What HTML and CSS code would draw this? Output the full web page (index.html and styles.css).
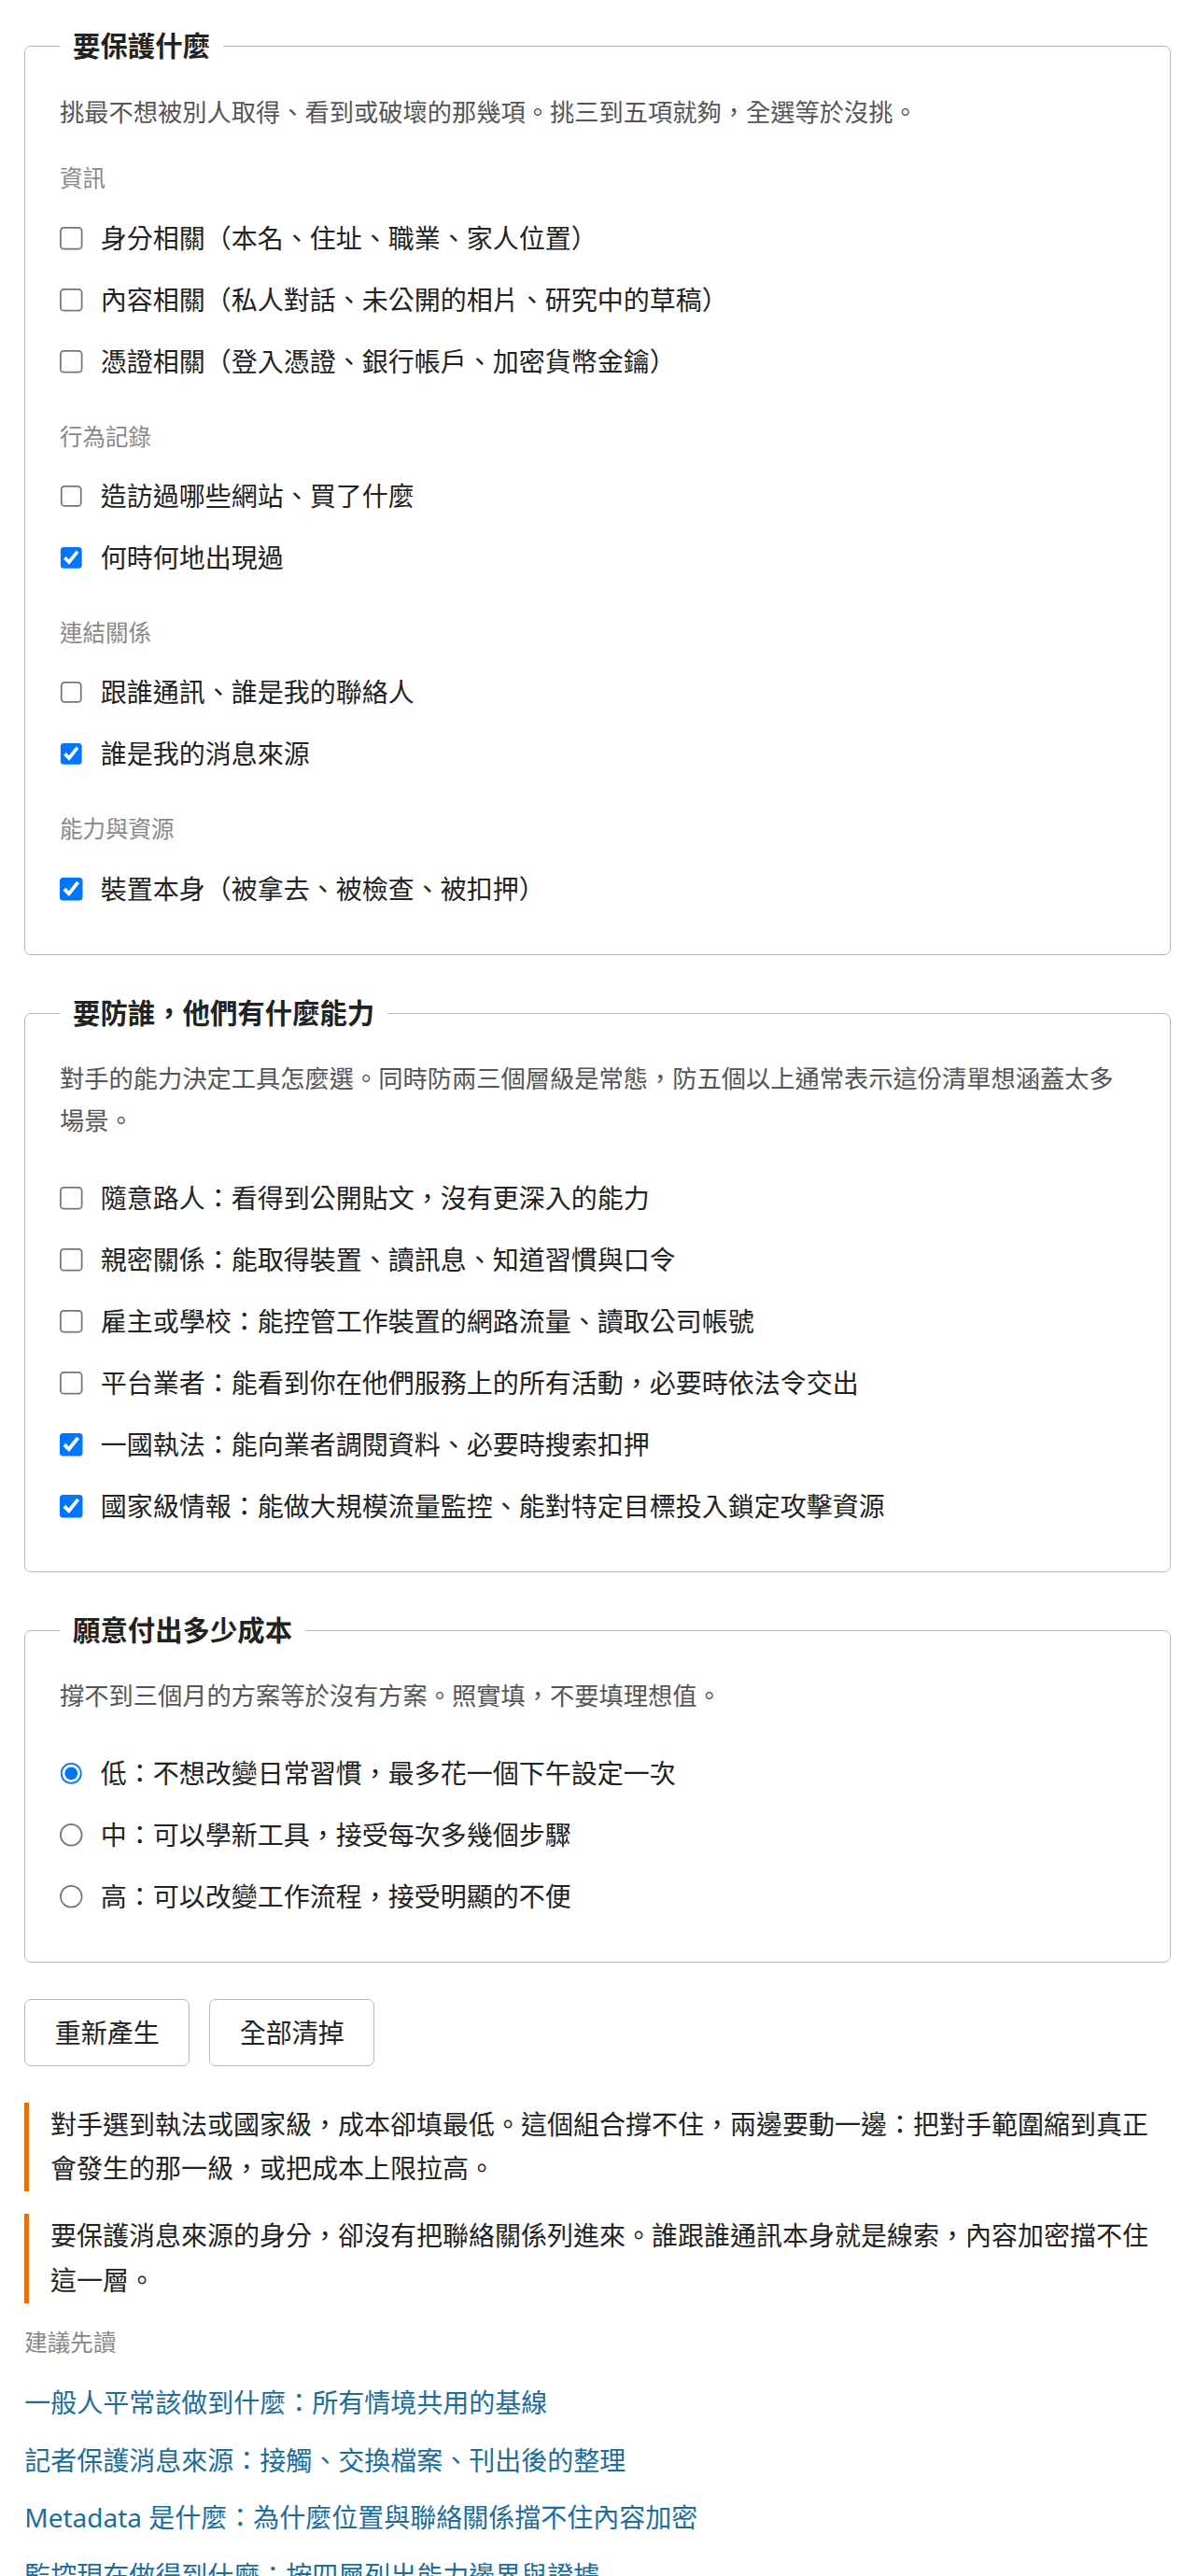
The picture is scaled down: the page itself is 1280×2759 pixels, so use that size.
FILE: index.html
```html
<!DOCTYPE html>
<html lang="zh-Hant">
<head>
<meta charset="utf-8">
<title>威脅模型</title>
<link rel="stylesheet" href="styles.css">
</head>
<body>
<main class="page">
  <fieldset class="box">
    <legend>要保護什麼</legend>
    <p class="hint">挑最不想被別人取得、看到或破壞的那幾項。挑三到五項就夠，全選等於沒挑。</p>
    <div class="group">資訊</div>
    <label class="opt"><input type="checkbox"><span>身分相關（本名、住址、職業、家人位置）</span></label>
    <label class="opt"><input type="checkbox"><span>內容相關（私人對話、未公開的相片、研究中的草稿）</span></label>
    <label class="opt"><input type="checkbox"><span>憑證相關（登入憑證、銀行帳戶、加密貨幣金鑰）</span></label>
    <div class="group">行為記錄</div>
    <label class="opt"><input type="checkbox"><span>造訪過哪些網站、買了什麼</span></label>
    <label class="opt"><input type="checkbox" checked><span>何時何地出現過</span></label>
    <div class="group">連結關係</div>
    <label class="opt"><input type="checkbox"><span>跟誰通訊、誰是我的聯絡人</span></label>
    <label class="opt"><input type="checkbox" checked><span>誰是我的消息來源</span></label>
    <div class="group">能力與資源</div>
    <label class="opt"><input type="checkbox" checked><span>裝置本身（被拿去、被檢查、被扣押）</span></label>
  </fieldset>

  <fieldset class="box">
    <legend>要防誰，他們有什麼能力</legend>
    <p class="hint">對手的能力決定工具怎麼選。同時防兩三個層級是常態，防五個以上通常表示這份清單想涵蓋太多場景。</p>
    <label class="opt"><input type="checkbox"><span>隨意路人：看得到公開貼文，沒有更深入的能力</span></label>
    <label class="opt"><input type="checkbox"><span>親密關係：能取得裝置、讀訊息、知道習慣與口令</span></label>
    <label class="opt"><input type="checkbox"><span>雇主或學校：能控管工作裝置的網路流量、讀取公司帳號</span></label>
    <label class="opt"><input type="checkbox"><span>平台業者：能看到你在他們服務上的所有活動，必要時依法令交出</span></label>
    <label class="opt"><input type="checkbox" checked><span>一國執法：能向業者調閱資料、必要時搜索扣押</span></label>
    <label class="opt"><input type="checkbox" checked><span>國家級情報：能做大規模流量監控、能對特定目標投入鎖定攻擊資源</span></label>
  </fieldset>

  <fieldset class="box">
    <legend>願意付出多少成本</legend>
    <p class="hint">撐不到三個月的方案等於沒有方案。照實填，不要填理想值。</p>
    <label class="opt"><input type="radio" name="cost" checked><span>低：不想改變日常習慣，最多花一個下午設定一次</span></label>
    <label class="opt"><input type="radio" name="cost"><span>中：可以學新工具，接受每次多幾個步驟</span></label>
    <label class="opt"><input type="radio" name="cost"><span>高：可以改變工作流程，接受明顯的不便</span></label>
  </fieldset>

  <div class="actions">
    <button type="button" class="btn">重新產生</button>
    <button type="button" class="btn">全部清掉</button>
  </div>

  <div class="warnings">
    <p class="warn">對手選到執法或國家級，成本卻填最低。這個組合撐不住，兩邊要動一邊：把對手範圍縮到真正會發生的那一級，或把成本上限拉高。</p>
    <p class="warn">要保護消息來源的身分，卻沒有把聯絡關係列進來。誰跟誰通訊本身就是線索，內容加密擋不住這一層。</p>
  </div>

  <div class="related-title">建議先讀</div>
  <ul class="related">
    <li><a href="#">一般人平常該做到什麼：所有情境共用的基線</a></li>
    <li><a href="#">記者保護消息來源：接觸、交換檔案、刊出後的整理</a></li>
    <li><a href="#">Metadata 是什麼：為什麼位置與聯絡關係擋不住內容加密</a></li>
    <li><a href="#">監控現在做得到什麼：按四層列出能力邊界與證據</a></li>
  </ul>
</main>
</body>
</html>
```

FILE: styles.css
```css
html {
  zoom: 1.75;
  background: #fff;
}

body {
  margin: 0;
  font-family: "Noto Sans", "Noto Sans CJK TC", sans-serif;
  font-size: 16px;
  line-height: 1.7;
  color: #222;
  background: #fff;
}

.page {
  padding: 15px;
}

.box {
  margin: 0 0 22px;
  padding: 14px 21px 21px;
  border: 1px solid #b8b8b8;
  border-radius: 4px;
  min-width: 0;
}

.box legend {
  padding: 0 8px;
  font-size: 16.8px;
  font-weight: 700;
  line-height: 1.6;
  color: #222;
}

.hint {
  margin: 0 0 16px;
  font-size: 15px;
  color: #555;
}

.group {
  margin: 15px 0 6px;
  font-size: 14px;
  color: #888;
}

.opt {
  display: flex;
  align-items: center;
  padding: 5.25px 0;
  cursor: pointer;
}

.opt input {
  width: 14px;
  height: 14px;
  margin: 0 11px 0 0;
  flex: none;
}

.actions {
  display: flex;
  gap: 12px;
  margin: 3px 0 22px;
}

.btn {
  font-family: inherit;
  font-size: 16px;
  line-height: 1.6;
  color: #222;
  background: #fff;
  border: 1px solid #b8b8b8;
  border-radius: 4px;
  padding: 7.3px 18px;
  cursor: pointer;
}

.warnings {
  display: flex;
  flex-direction: column;
  gap: 14px;
  margin-bottom: 12px;
}

.warn {
  margin: 0;
  padding-left: 13px;
  border-left: 3px solid #e8700a;
  color: #222;
}

.related-title {
  font-size: 14px;
  color: #888;
  margin-bottom: 12px;
}

.related {
  list-style: none;
  margin: 0;
  padding: 0;
}

.related li {
  margin-bottom: 8px;
}

.related a {
  color: #1a6e9e;
  text-decoration: none;
}
```
